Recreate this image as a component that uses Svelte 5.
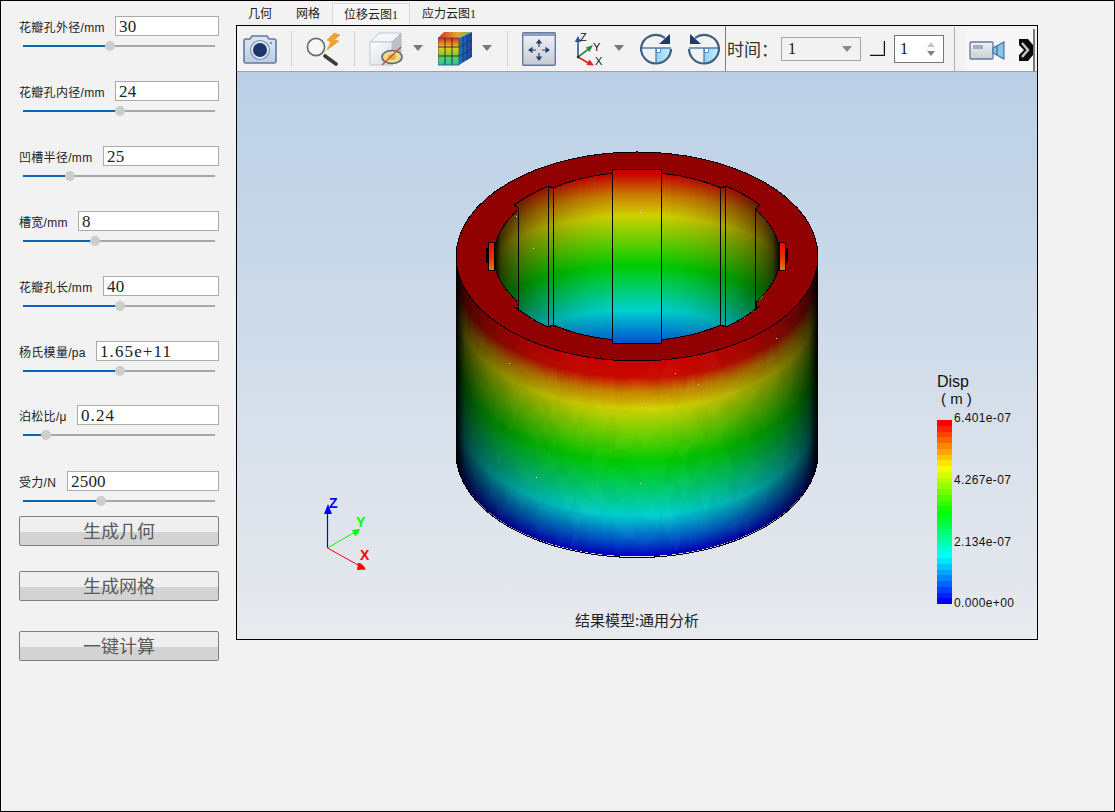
<script>
  const fields = [
    { label: '花瓣孔外径/mm', value: '30', w: 104, thumb: 110 },
    { label: '花瓣孔内径/mm', value: '24', w: 104, thumb: 120 },
    { label: '凹槽半径/mm', value: '25', w: 116, thumb: 70 },
    { label: '槽宽/mm', value: '8', w: 141, thumb: 95 },
    { label: '花瓣孔长/mm', value: '40', w: 116, thumb: 120 },
    { label: '杨氏模量/pa', value: '1.65e+11', w: 123, thumb: 120, wide: true },
    { label: '泊松比/μ', value: '0.24', w: 142, thumb: 46, wide: true },
    { label: '受力/N', value: '2500', w: 152, thumb: 101 }
  ];
  const tabs = ['几何', '网格', '位移云图1', '应力云图1'];
  const buttons = ['生成几何', '生成网格', '一键计算'];

  const hex = (h) => [1, 3, 5].map((i) => parseInt(h.slice(i, i + 2), 16));
  function ramp(stops, v) {
    if (v <= stops[0][0]) return `rgb(${hex(stops[0][1]).join(',')})`;
    for (let i = 1; i < stops.length; i++) {
      if (v <= stops[i][0]) {
        const t = (v - stops[i - 1][0]) / (stops[i][0] - stops[i - 1][0]);
        const a = hex(stops[i - 1][1]);
        const b = hex(stops[i][1]);
        return `rgb(${a.map((c, k) => Math.round(c + (b[k] - c) * t)).join(',')})`;
      }
    }
    return `rgb(${hex(stops[stops.length - 1][1]).join(',')})`;
  }

  const sideRamp = [[0, '#d00000'], [18, '#cc0c00'], [32, '#c88000'], [49, '#d2d200'], [102, '#00cc00'], [156, '#00d0d0'], [182, '#0050c8'], [196, '#0000c0']];
  const innerRamp = [[0, '#c80000'], [22, '#c88000'], [42, '#d0d000'], [92, '#00cc00'], [137, '#00d0d0'], [170, '#0050d0'], [185, '#0000c0']];

  const sideSlices = Array.from({ length: 197 }, (_, i) => ({ d: 196 - i, fill: ramp(sideRamp, 196 - i) }));
  const innerSlices = Array.from({ length: 190 }, (_, d) => ({ d, fill: ramp(innerRamp, d) }));
  const slotBands = Array.from({ length: 174 }, (_, i) => ({ y: 170 + i, fill: ramp(innerRamp, i - 3) }));

  const shade = Array.from({ length: 41 }, (_, i) => {
    const u = -1 + i / 20;
    return { off: i / 40, op: (1 - Math.sqrt(Math.max(0, 1 - u * u))).toFixed(3) };
  });

  // seeded triangle mesh drawn faintly over the outer wall
  let seed = 7;
  const rnd = () => (seed = (seed * 16807) % 2147483647) / 2147483647;
  const facets = [];
  const pt = (th, d) => [637 + 181 * Math.sin(th), 256 + d + 104 * Math.cos(th)];
  const cols = 36;
  const rows = 11;
  for (let r = 0; r < rows; r++) {
    for (let c = -1; c < cols; c++) {
      const off = r % 2 ? 0.5 : 0;
      const th = (k) => -Math.PI / 2 + (Math.PI * Math.min(cols, Math.max(0, k))) / cols;
      const d0 = (197 * r) / rows;
      const d1 = (197 * (r + 1)) / rows;
      const tris = [
        [pt(th(c + off), d0), pt(th(c + 1 + off), d0), pt(th(c + 0.5 + off), d1)],
        [pt(th(c + 1 + off), d0), pt(th(c + 0.5 + off), d1), pt(th(c + 1.5 + off), d1)]
      ];
      for (const t of tris) {
        facets.push({
          points: t.map((p) => p.map((n) => n.toFixed(1)).join(',')).join(' '),
          fill: rnd() > 0.5 ? '#000' : '#fff',
          op: (rnd() * 0.028).toFixed(3)
        });
      }
    }
  }

  const bar = Array.from({ length: 32 }, (_, i) => {
    const t = i / 31;
    const s = [[0, '#ff0000'], [0.25, '#ffff00'], [0.5, '#00ff00'], [0.75, '#00ffff'], [1, '#0000ff']];
    return { y: 420 + i * 5.75, fill: ramp(s, t) };
  });
  const legend = [
    { text: '6.401e-07', y: 422 },
    { text: '4.267e-07', y: 484 },
    { text: '2.134e-07', y: 546 },
    { text: '0.000e+00', y: 607 }
  ];
  const specks = [[640, 212], [533, 248], [776, 338], [675, 373], [698, 384], [641, 407], [640, 483], [536, 477], [509, 363], [516, 216]];

  const innerPath = 'M553 188 A143 83 0 0 1 721 188 L726 186 Q745 194 760 205 L756 208 L756 210 A143 83 0 0 1 756 302 L756 310 L760 306 Q745 318 726 327 L721 325 A143 83 0 0 1 553 325 L548 327 Q530 319 514 306 L518 310 L518 302 A143 83 0 0 1 518 210 L518 208 L514 205 Q530 194 548 186 Z';
</script>

<div class="window">
  <aside class="panel">
    {#each fields as f}
      <div class="row">
        <div class="line">
          <span class="label">{f.label}</span>
          <div class="field" class:wide={f.wide} style="width:{f.w}px">{f.value}</div>
        </div>
        <div class="slider">
          <div class="fill" style="width:{f.thumb - 23}px"></div>
          <div class="thumb" style="left:{f.thumb - 23}px"></div>
        </div>
      </div>
    {/each}
    <div class="buttons">
      {#each buttons as b}
        <button class="btn">{b}</button>
      {/each}
    </div>
  </aside>

  <main class="main">
    <div class="tabs">
      {#each tabs as t, i}
        <div class="tab" class:active={i === 2}>{t}</div>
      {/each}
    </div>

    <div class="frame">
      <div class="toolbar">
        <svg class="ic" width="34" height="34" viewBox="0 0 34 34">
          <defs>
            <linearGradient id="camB" x1="0" y1="0" x2="0" y2="1"><stop offset="0" stop-color="#dfe8f3" /><stop offset="1" stop-color="#bccde3" /></linearGradient>
          </defs>
          <path d="M7 7 L9 4 H24 L26 7 H31 Q33 7 33 9 V29 Q33 31 31 31 H3 Q1 31 1 29 V9 Q1 7 3 7 Z" fill="url(#camB)" stroke="#5d7ba3" stroke-width="1.6" />
          <circle cx="17" cy="18" r="9.5" fill="#dce6f2" stroke="#7f94b4" stroke-width="1.2" />
          <circle cx="17" cy="18" r="7" fill="#1c3768" />
          <circle cx="28" cy="11" r="1.1" fill="#5d7ba3" />
        </svg>
        <div class="sep"></div>
        <svg class="ic" width="34" height="34" viewBox="0 0 34 34">
          <path d="M19 24 L30 32" stroke="#3a3a3a" stroke-width="3.6" stroke-linecap="round" />
          <circle cx="10" cy="15" r="8.6" fill="#f4f6f8" stroke="#6a6a6a" stroke-width="1.6" />
          <path d="M28 1 L21 8 L25 10 L21 18 L33 9 L28 8 L34 3 Z" fill="#f2a22c" stroke="#e08a18" stroke-width=".5" />
        </svg>
        <div class="sep"></div>
        <svg class="ic" width="34" height="34" viewBox="0 0 34 34">
          <defs>
            <linearGradient id="cubeF" x1="0" y1="0" x2="1" y2="1"><stop offset="0" stop-color="#fff" /><stop offset="1" stop-color="#d4d9e0" /></linearGradient>
          </defs>
          <path d="M1 10 L10 1 H32 L23 10 Z" fill="#f5f6f8" stroke="#c0c6cf" />
          <path d="M23 10 L32 1 V24 L23 33 Z" fill="#bcc2cb" stroke="#b2b8c2" />
          <rect x="1" y="10" width="22" height="23" fill="url(#cubeF)" stroke="#c0c6cf" />
          <ellipse cx="23" cy="25" rx="10" ry="6.5" fill="#f0d98c" stroke="#4e6a8c" stroke-width="1.6" />
          <ellipse cx="23" cy="25" rx="4" ry="3" fill="#d8b050" />
          <path d="M13 33 L32 15" stroke="#d2552a" stroke-width="1.5" />
        </svg>
        <svg class="drop" width="10" height="6"><path d="M0 0 H10 L5 6 Z" fill="#7a7a7a" /></svg>
        <svg class="ic cube2" width="34" height="34" viewBox="0 0 34 34">
          <defs>
            <linearGradient id="cubeTop" x1="0" y1="0" x2="1" y2="0"><stop offset="0" stop-color="#d83020" /><stop offset=".55" stop-color="#e8a030" /><stop offset="1" stop-color="#60c060" /></linearGradient>
            <linearGradient id="cubeFace" x1="0" y1="0" x2="0" y2="1"><stop offset="0" stop-color="#e6281c" /><stop offset=".35" stop-color="#f0c818" /><stop offset=".65" stop-color="#70d030" /><stop offset="1" stop-color="#18c4c8" /></linearGradient>
            <linearGradient id="cubeSide" x1="0" y1="0" x2="1" y2="0"><stop offset="0" stop-color="#1e78c0" /><stop offset="1" stop-color="#24409c" /></linearGradient>
          </defs>
          <path d="M0 6 L6 0 H34 L21 6 Z" fill="url(#cubeTop)" />
          <path d="M21 6 L34 0 V25 L21 33 Z" fill="url(#cubeSide)" />
          <path d="M25 5 V30 M29 3 V28 M21 15 L34 8 M21 24 L34 17" stroke="#16306c" stroke-width=".8" />
          <rect x="0" y="6" width="21" height="27" fill="url(#cubeFace)" />
          <path d="M7 6 V33 M14 6 V33 M0 15 H21 M0 24 H21" stroke="#1e2a40" stroke-width=".9" />
          <path d="M0 6 H21 V33 H0 Z" fill="none" stroke="#3a4660" stroke-width=".8" />
        </svg>
        <svg class="drop" width="10" height="6"><path d="M0 0 H10 L5 6 Z" fill="#7a7a7a" /></svg>
        <div class="sep s2"></div>
        <svg class="ic" width="34" height="34" viewBox="0 0 34 34">
          <defs>
            <linearGradient id="fitB" x1="0" y1="0" x2="0" y2="1"><stop offset="0" stop-color="#f0f2f6" /><stop offset="1" stop-color="#c6cad4" /></linearGradient>
          </defs>
          <rect x=".7" y=".7" width="32.6" height="32.6" rx="1" fill="url(#fitB)" stroke="#66789c" stroke-width="1.4" />
          <rect x="1" y="1" width="32" height="3" fill="#8a9cc0" />
          <g fill="#26416f" stroke="#26416f" stroke-width="1.2">
            <path d="M9 18 H14 M20 18 H25 M17 10 V15 M17 21 V26" fill="none" />
            <path d="M17 7 L13.8 11.5 H20.2 Z M17 29 L13.8 24.5 H20.2 Z M6 18 L10.5 14.8 V21.2 Z M28 18 L23.5 14.8 V21.2 Z" stroke="none" />
          </g>
        </svg>
        <svg class="ic axes" width="34" height="34" viewBox="0 0 34 34">
          <path d="M6 25 V8" stroke="#2a55a8" stroke-width="1.6" />
          <path d="M6 4 L2.8 10 H9.2 Z" fill="#2a55a8" />
          <path d="M6 25 L18 16" stroke="#2c8a3e" stroke-width="1.6" />
          <path d="M21 13 L13.8 15.6 L17.6 20 Z" fill="#2c8a3e" />
          <path d="M6 25 L18 32" stroke="#e02020" stroke-width="1.6" />
          <path d="M22 33.5 L14.5 33 L17.5 27.5 Z" fill="#e02020" />
          <circle cx="6" cy="25" r="1.2" fill="#222" />
          <text class="axlabel" x="8" y="9">Z</text>
          <text class="axlabel" x="21" y="19">Y</text>
          <text class="axlabel" x="23" y="33">X</text>
        </svg>
        <svg class="drop d3" width="10" height="6"><path d="M0 0 H10 L5 6 Z" fill="#7a7a7a" /></svg>
        <svg class="ic rot" width="32" height="34" viewBox="0 0 32 34">
          <defs>
            <linearGradient id="rotQ" x1="0" y1="0" x2="1" y2="0"><stop offset="0" stop-color="#8ed2f2" /><stop offset="1" stop-color="#d2edf9" /></linearGradient>
          </defs>
          <path d="M16 16 H31 A15 15 0 0 1 16 32 Z" fill="url(#rotQ)" />
          <path d="M1 16 H31" stroke="#3a78b4" stroke-width="1.4" />
          <path d="M16 16 V32" stroke="#3a78b4" stroke-width="1.2" />
          <path d="M16.5 16.5 H20.5 V20.5 H16.5 Z" fill="#fff" stroke="#3a78b4" stroke-width=".8" />
          <path d="M25 6 A15 15 0 0 0 1 16 A15 15 0 0 0 31 17" fill="none" stroke="#3f5d85" stroke-width="2.2" />
          <path d="M30 2 V12 H19 Z" fill="#1d3a6a" />
        </svg>
        <svg class="ic rot" width="32" height="34" viewBox="0 0 32 34">
          <path d="M16 16 H31 A15 15 0 0 1 16 32 Z" fill="url(#rotQ)" />
          <path d="M1 16 H31" stroke="#3a78b4" stroke-width="1.4" />
          <path d="M16 16 V32" stroke="#3a78b4" stroke-width="1.2" />
          <path d="M16.5 16.5 H20.5 V20.5 H16.5 Z" fill="#fff" stroke="#3a78b4" stroke-width=".8" />
          <path d="M7 6 A15 15 0 0 1 31 16 A15 15 0 0 1 1 17" fill="none" stroke="#3f5d85" stroke-width="2.2" />
          <path d="M2 2 V12 H13 Z" fill="#1d3a6a" />
        </svg>
        <div class="vline"></div>
        <span class="timelabel">时间：</span>
        <div class="combo"><span>1</span><svg width="10" height="6"><path d="M0 0 H10 L5 6 Z" fill="#8a8a8a" /></svg></div>
        <div class="square"></div>
        <div class="spin">
          <span>1</span>
          <div class="arrows">
            <svg width="8" height="5"><path d="M4 0 L8 5 H0 Z" fill="#c4c4c4" /></svg>
            <svg width="8" height="5"><path d="M0 0 H8 L4 5 Z" fill="#808080" /></svg>
          </div>
        </div>
        <div class="sep s3"></div>
        <div class="more">
          <svg width="36" height="19" viewBox="0 0 36 19">
            <defs>
              <linearGradient id="vid" x1="0" y1="0" x2="0" y2="1"><stop offset="0" stop-color="#eef1f5" /><stop offset="1" stop-color="#c9ced8" /></linearGradient>
            </defs>
            <rect x="1" y="1" width="23" height="17" rx="1" fill="url(#vid)" stroke="#66789c" stroke-width="1.3" />
            <rect x="4" y="4" width="10" height="4" fill="#a8aeb8" />
            <path d="M24 7 L35 1 V18 L24 12 Z" fill="#8cc4e8" stroke="#3f6e9e" stroke-width="1.1" />
            <path d="M28 5 V14" stroke="#2f6796" stroke-width="1.2" />
          </svg>
          <svg class="chev" width="14" height="22" viewBox="0 0 14 22">
            <path d="M0 0 L9 0 L14 6 V16 L9 22 L0 22 V16 L5 11 L0 6 Z" fill="#0a0a0a" />
            <path d="M3 4 L9 11 L3 18" fill="none" stroke="#c8c8c8" stroke-width="2.4" />
          </svg>
        </div>
      </div>

      <svg class="scene" width="800" height="567" viewBox="237 72 800 567">
        <defs>
          <linearGradient id="bg" x1="0" y1="0" x2="0" y2="1">
            <stop offset="0" stop-color="#bacfe6" />
            <stop offset="1" stop-color="#e8eaee" />
          </linearGradient>
          <linearGradient id="shadeO" gradientUnits="userSpaceOnUse" x1="456" y1="0" x2="818" y2="0">
            {#each shade as s}<stop offset={s.off} stop-color="#000" stop-opacity={s.op} />{/each}
          </linearGradient>
          <linearGradient id="shadeI" gradientUnits="userSpaceOnUse" x1="494" y1="0" x2="780" y2="0">
            {#each shade as s}<stop offset={s.off} stop-color="#000" stop-opacity={s.op} />{/each}
          </linearGradient>
          <clipPath id="innerClip"><path d={innerPath} /></clipPath>
          <clipPath id="sideClip"><path d="M456 256 V453 A181 104.5 0 0 0 818 453 V256 Z" /></clipPath>
          <linearGradient id="pocket" x1="0" y1="0" x2="0" y2="1"><stop offset="0" stop-color="#ee0800" /><stop offset=".6" stop-color="#e83a00" /><stop offset="1" stop-color="#e88000" /></linearGradient>
        </defs>
        <rect x="237" y="72" width="800" height="567" fill="url(#bg)" />

        <g shape-rendering="crispEdges">
          {#each sideSlices as s}
            <ellipse cx="637" cy={256 + s.d} rx="181" ry="104.5" fill={s.fill} />
          {/each}
        </g>
        <g clip-path="url(#sideClip)">
          {#each facets as f}<polygon points={f.points} fill={f.fill} opacity={f.op} />{/each}
          <rect x="456" y="256" width="362" height="310" fill="url(#shadeO)" />
        </g>
        <g shape-rendering="crispEdges">
          <path d="M456 453 A181 104.5 0 0 0 818 453" fill="none" stroke="#000" />
          <ellipse cx="637" cy="256.5" rx="181" ry="104.5" fill="#900000" stroke="#000" />

          <rect x="486" y="248" width="3" height="15" fill="#000" />
          <rect x="488.5" y="242.5" width="6" height="28" fill="url(#pocket)" stroke="#000" />
          <rect x="785" y="248" width="3" height="15" fill="#000" />
          <rect x="779.5" y="242.5" width="6" height="28" fill="url(#pocket)" stroke="#000" />

          <g clip-path="url(#innerClip)">
            <rect x="490" y="165" width="295" height="190" fill="#c80000" />
            {#each innerSlices as s}
              <ellipse cx="637" cy={223 + s.d} rx="143" ry="50" fill={s.fill} />
            {/each}
            <rect x="490" y="165" width="295" height="190" fill="url(#shadeI)" shape-rendering="auto" />
          </g>
          <path d={innerPath} fill="none" stroke="#000" />
          <path d="M518.5 208 V310 M548.5 186 V327 M553.5 188 V325 M720.5 188 V325 M725.5 186 V327 M755.5 208 V310" stroke="#000" fill="none" />

          {#each slotBands as b}
            <rect x="613" y={b.y} width="49" height="1" fill={b.fill} />
          {/each}
          <rect x="612.5" y="169.5" width="49" height="173.5" fill="none" stroke="#000" />
          {#each specks as p}
            <rect x={p[0]} y={p[1]} width="1" height="1" fill="#d4dce6" />
          {/each}
        </g>

        <g class="triad">
          <path d="M327.5 548 V512" stroke="#0000ff" stroke-width="1.2" />
          <path d="M328 504 L324 514 H332 Z" fill="#0000ff" />
          <path d="M327.5 548 L355 532" stroke="#00ff00" stroke-width="1" />
          <path d="M360 529 L352 530 L355 536 Q358 535 360 529 Z" fill="#00ff00" />
          <path d="M327.5 548 L358 565" stroke="#ff0000" stroke-width="1" />
          <path d="M366 569.5 L357 570 L358 563 Q362 562 366 569.5 Z" fill="#ff0000" />
          <text class="tri" x="329" y="508" fill="#0000ff">Z</text>
          <text class="tri" x="356" y="527" fill="#00ff00">Y</text>
          <text class="tri" x="360" y="560" fill="#ff0000">X</text>
        </g>

        <text class="disp" x="937" y="387">Disp</text>
        <text class="disp unit" x="941" y="404">( m )</text>
        <g shape-rendering="crispEdges">
          {#each bar as b}
            <rect x="937" y={b.y} width="15" height="6" fill={b.fill} />
          {/each}
        </g>
        {#each legend as l}
          <text class="leg" x="954" y={l.y}>{l.text}</text>
        {/each}
        <text class="caption" x="637" y="626">结果模型:通用分析</text>
      </svg>
    </div>
  </main>
</div>

<style>
  :global(body) {
    margin: 0;
    background: #f2f2f2;
  }
  .window {
    box-sizing: border-box;
    width: 1115px;
    height: 812px;
    border: 1px solid #000;
    background: #f2f2f2;
    display: flex;
    overflow: hidden;
    font-family: "Liberation Sans", "Noto Sans CJK SC", sans-serif;
  }
  .panel {
    box-sizing: border-box;
    width: 235px;
    flex: none;
    padding: 15px 0 0 18px;
  }
  .row {
    width: 200px;
    height: 65px;
  }
  .row:nth-child(6) { height: 64px; }
  .row:nth-child(7) { height: 66px; }
  .row:nth-child(8) { height: 45px; }
  .line {
    display: flex;
    justify-content: space-between;
    align-items: center;
    height: 20px;
  }
  .label {
    font-size: 12px;
    color: #222;
    white-space: nowrap;
    letter-spacing: .3px;
    margin-top: 1px;
  }
  .field {
    box-sizing: border-box;
    height: 20px;
    border: 1px solid #ababab;
    background: #fff;
    padding-left: 3px;
    font: 17px/20px "Liberation Serif", "Noto Sans CJK SC", serif;
    color: #222;
    letter-spacing: .2px;
  }
  .field.wide { letter-spacing: 1.1px; }
  .slider {
    position: relative;
    width: 192px;
    height: 2px;
    margin: 9px 0 0 4px;
    background: #a8a8a8;
  }
  .fill {
    height: 2px;
    background: #0a64b8;
  }
  .thumb {
    position: absolute;
    top: -4px;
    width: 10px;
    height: 10px;
    margin-left: -5px;
    border-radius: 50%;
    background: #cdcdcd;
  }
  .buttons {
    width: 200px;
    display: flex;
    flex-direction: column;
  }
  .btn {
    box-sizing: border-box;
    width: 200px;
    height: 30px;
    padding: 0 0 3px;
    border: 1px solid #808080;
    border-radius: 2px;
    background: linear-gradient(#efefef 0 52%, #d3d3d3 52% 100%);
    font: 18px/24px "Noto Sans CJK SC", sans-serif;
    color: #5a5a5a;
  }
  .btn:nth-child(2) { margin-top: 25px; }
  .btn:nth-child(3) { margin-top: 30px; }

  .main {
    flex: none;
    width: 802px;
  }
  .tabs {
    display: flex;
    align-items: flex-end;
    height: 24px;
  }
  .tab {
    box-sizing: border-box;
    height: 22px;
    padding: 0 12px;
    font: 12px/23px "Liberation Serif", "Noto Sans CJK SC", serif;
    color: #222;
  }
  .tab.active {
    background: #f6f6f6;
    border: 1px solid #dadada;
    border-bottom: 0;
    padding: 0 11px;
    line-height: 22px;
  }
  .frame {
    box-sizing: border-box;
    width: 802px;
    height: 615px;
    border: 1px solid #000;
    background: #f2f2f2;
  }
  .toolbar {
    box-sizing: border-box;
    display: flex;
    align-items: center;
    height: 46px;
    padding-left: 6px;
    border-bottom: 1px solid #a0a0a0;
  }
  .toolbar > * { flex: none; }
  .sep {
    width: 1px;
    height: 36px;
    margin: 0 14px;
    background: #d4d4d4;
  }
  .sep.s2 { margin-left: 15px; }
  .sep.s3 { margin: 0 10px; height: 44px; background: #b0b0b0; }
  .drop { margin-left: 10px; margin-top: -1px; }
  .cube2 { margin-left: 15px; }
  .axes { margin-left: 16px; }
  .drop.d3 { margin-left: 8px; }
  .rot { margin-left: 16px; }
  .axlabel {
    font: 11px "Liberation Sans", sans-serif;
    fill: #111;
  }
  .vline {
    align-self: stretch;
    width: 1px;
    margin: 0 1px 0 5px;
    background: #7c7c7c;
  }
  .timelabel {
    width: 54px;
    font: 17px/20px "Noto Sans CJK SC", sans-serif;
    color: #333;
    white-space: nowrap;
  }
  .combo {
    box-sizing: border-box;
    width: 80px;
    height: 24px;
    border: 1px solid #a6a6a6;
    display: flex;
    align-items: center;
    justify-content: space-between;
    padding: 0 8px 0 6px;
    font: 16px "Liberation Serif", serif;
    color: #111;
  }
  .square {
    box-sizing: border-box;
    width: 15px;
    height: 15px;
    margin: 0 9px;
    border-right: 1px solid #111;
    border-bottom: 1px solid #111;
    box-shadow: inset -1px -1px 0 #bbb;
  }
  .spin {
    box-sizing: border-box;
    width: 50px;
    height: 28px;
    border: 1px solid #777;
    background: #fff;
    display: flex;
    align-items: center;
    justify-content: space-between;
    padding: 0 8px 0 5px;
    font: 16px "Liberation Serif", serif;
    color: #111;
  }
  .arrows {
    display: flex;
    flex-direction: column;
    gap: 4px;
  }
  .arrows svg { display: block; }
  .more {
    box-sizing: border-box;
    align-self: flex-end;
    width: 70px;
    height: 43px;
    margin-bottom: -1px;
    padding-left: 4px;
    display: flex;
    align-items: center;
    gap: 14px;
    background: #f7f7f7;
    border-right: 2px solid #777;
    border-bottom: 1px solid #a0a0a0;
  }
  .scene { display: block; }
  .tri {
    font: bold 14px "Liberation Sans", sans-serif;
  }
  .disp {
    font: 16px "Liberation Sans", sans-serif;
    fill: #111;
  }
  .disp.unit { font-size: 15px; }
  .leg {
    font: 12px "Liberation Sans", sans-serif;
    letter-spacing: .35px;
    fill: #111;
  }
  .caption {
    font: 15px "Noto Sans CJK SC", sans-serif;
    text-anchor: middle;
    fill: #222;
  }
</style>
